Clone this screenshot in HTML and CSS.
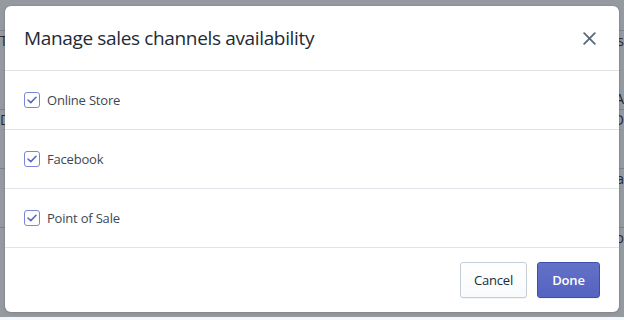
FILE: index.html
```html
<!DOCTYPE html>
<html lang="en">
<head>
  <meta charset="UTF-8">
  <title>Manage sales channels availability</title>
  <link rel="stylesheet" href="styles.css">
</head>
<body>

<div class="page">
  <div class="page-row"><span class="left">T</span><span class="right">s</span></div>
  <div class="page-row small"><span class="left"></span><span class="right">A</span></div>
  <div class="page-row"><span class="left">D</span><span class="right">D</span></div>
  <div class="page-row"><span class="left"></span><span class="right">Fa</span></div>
  <div class="page-row"><span class="left"></span><span class="right">Po</span></div>
</div>

<div class="overlay">
  <div class="modal">
    <div class="modal-header">
      <h2>Manage sales channels availability</h2>
      <button class="close" type="button" aria-label="Close">
        <svg width="13" height="13" viewBox="0 0 13 13">
          <path d="M1.2 1.2 L11.8 11.8 M11.8 1.2 L1.2 11.8" stroke="#5e6b7a" stroke-width="1.9" stroke-linecap="round"/>
        </svg>
      </button>
    </div>

    <label class="channel">
      <span class="check">
        <svg width="10" height="8" viewBox="0 0 10 8"><path d="M1 4 L3.8 6.6 L9 1.3" fill="none" stroke="#5c6ac4" stroke-width="1.6" stroke-linecap="round" stroke-linejoin="round"/></svg>
      </span>
      Online Store
    </label>
    <label class="channel">
      <span class="check">
        <svg width="10" height="8" viewBox="0 0 10 8"><path d="M1 4 L3.8 6.6 L9 1.3" fill="none" stroke="#5c6ac4" stroke-width="1.6" stroke-linecap="round" stroke-linejoin="round"/></svg>
      </span>
      Facebook
    </label>
    <label class="channel">
      <span class="check">
        <svg width="10" height="8" viewBox="0 0 10 8"><path d="M1 4 L3.8 6.6 L9 1.3" fill="none" stroke="#5c6ac4" stroke-width="1.6" stroke-linecap="round" stroke-linejoin="round"/></svg>
      </span>
      Point of Sale
    </label>

    <div class="modal-footer">
      <button class="btn" type="button">Cancel</button>
      <button class="btn primary" type="button">Done</button>
    </div>
  </div>
</div>

</body>
</html>
```

FILE: styles.css
```css
body {
  margin: 0;
  padding: 0;
  font-family: "Open Sans", "Noto Sans", sans-serif;
  color: #212b36;
  background-color: #f4f6f8;
  width: 624px;
  height: 320px;
  overflow: hidden;
  position: relative;
}
.page {
  padding-top: 30px;
}
.page-row {
  display: flex;
  justify-content: space-between;
  height: 58px;
  border-top: 1px solid #c4cdd5;
  font-size: 14px;
  line-height: 20px;
  color: #212b36;
}
.page-row.small {
  height: 20px;
  border-top: none;
}
.overlay {
  position: absolute;
  left: 0;
  top: 0;
  width: 624px;
  height: 317px;
  background-color: rgba(33, 43, 54, 0.45);
  padding: 6px 5px 0;
  box-sizing: border-box;
}
.modal {
  width: 614px;
  height: 306px;
  background-color: #fff;
  border-radius: 6px;
  box-shadow: 0 0 0 1px rgba(63, 63, 68, 0.05), 0 1px 3px rgba(63, 63, 68, 0.2);
  display: flex;
  flex-direction: column;
  overflow: hidden;
}
.modal-header {
  display: flex;
  align-items: center;
  justify-content: space-between;
  height: 64px;
  padding: 0 23px 0 19px;
  border-bottom: 1px solid #dfe3e8;
}
.modal-header h2 {
  margin: 0;
  font-size: 19px;
  font-weight: 400;
  color: #212b36;
  letter-spacing: -0.35px;
}
.close {
  border: none;
  background: none;
  padding: 0;
  display: flex;
  cursor: pointer;
}
.channel {
  display: flex;
  align-items: center;
  gap: 7px;
  height: 58px;
  padding: 0 19px;
  border-bottom: 1px solid #dfe3e8;
  font-size: 13px;
  letter-spacing: -0.2px;
  color: #3d4752;
}
.check {
  width: 14px;
  height: 14px;
  border: 1px solid #7c86d4;
  border-radius: 3px;
  display: flex;
  align-items: center;
  justify-content: center;
}
.modal-footer {
  flex: 1;
  display: flex;
  justify-content: flex-end;
  align-items: center;
  gap: 10px;
  padding: 0 19px 0 0;
}
.btn {
  height: 36px;
  padding: 0 13px;
  font-family: "Open Sans", "Noto Sans", sans-serif;
  font-size: 13px;
  letter-spacing: -0.2px;
  color: #212b36;
  background: linear-gradient(#fff, #f9fafb);
  border: 1px solid #c4cdd5;
  border-radius: 3px;
  box-shadow: 0 1px 0 rgba(22, 29, 37, 0.05);
  cursor: pointer;
}
.btn.primary {
  min-width: 63px;
  padding: 0 12px;
  color: #fff;
  font-weight: 600;
  background: linear-gradient(#6371c7, #5563c1);
  border-color: #3f4eae;
}
```
